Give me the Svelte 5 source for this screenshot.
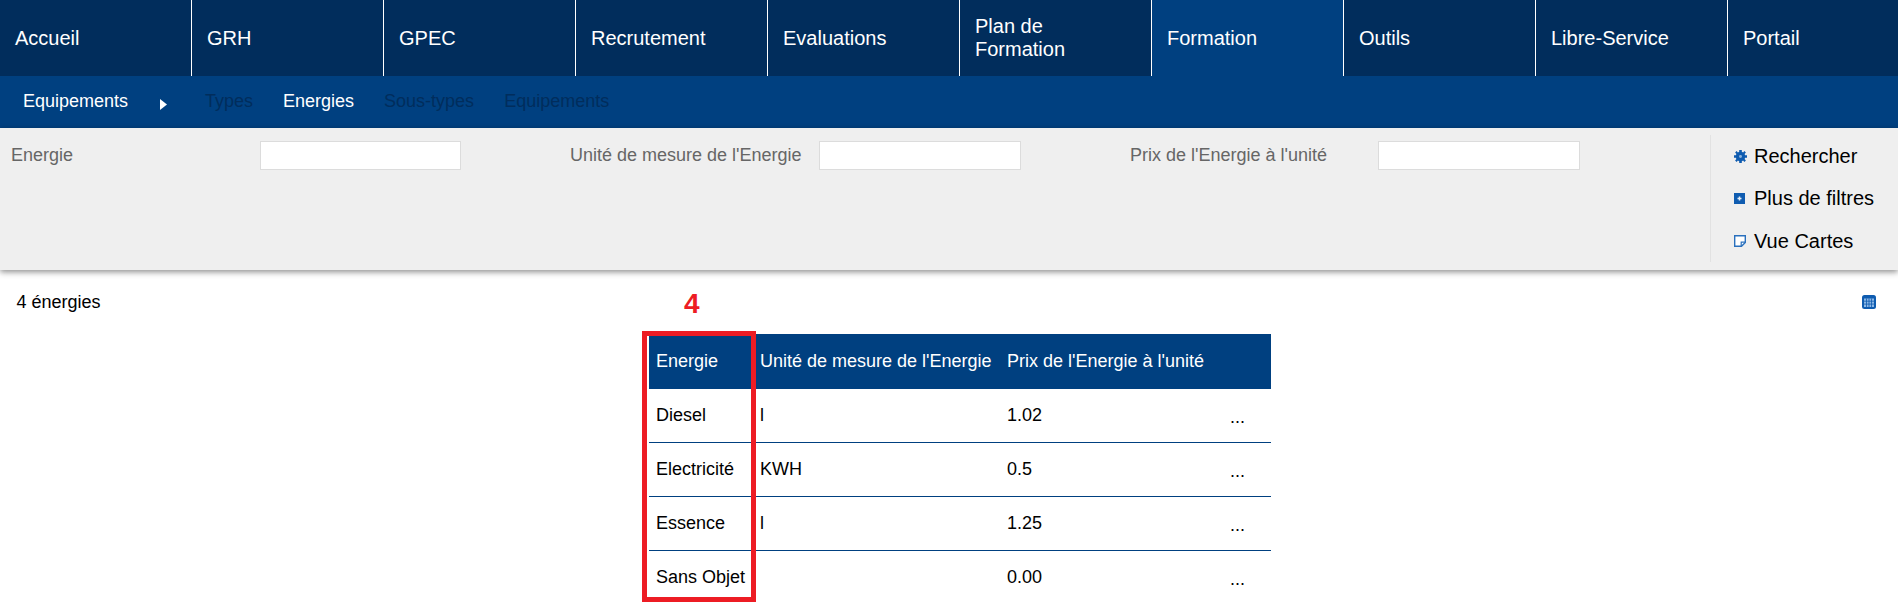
<script>
  const menu = ['Accueil', 'GRH', 'GPEC', 'Recrutement', 'Evaluations', 'Plan de Formation', 'Formation', 'Outils', 'Libre-Service', 'Portail'];
  const subItems = [
    { label: 'Types', on: false },
    { label: 'Energies', on: true },
    { label: 'Sous-types', on: false },
    { label: 'Equipements', on: false }
  ];
  const filters = ['Energie', "Unité de mesure de l'Energie", "Prix de l'Energie à l'unité"];
  const rows = [
    ['Diesel', 'l', '1.02'],
    ['Electricité', 'KWH', '0.5'],
    ['Essence', 'l', '1.25'],
    ['Sans Objet', '', '0.00']
  ];
</script>

<nav class="menu">
  {#each menu as item}
    <a class="menu-item" class:active={item === 'Formation'} href="#top">{item}</a>
  {/each}
</nav>

<div class="subnav">
  <span class="sub-title">Equipements</span>
  <svg class="sub-arrow" width="7" height="11" viewBox="0 0 7 11"><path d="M0 0l7 5.5-7 5.5z" fill="#fff" /></svg>
  {#each subItems as s}
    <a class="sub-item" class:on={s.on} href="#top">{s.label}</a>
  {/each}
</div>

<section class="filters">
  <div class="fields">
    {#each filters as f}
      <div class="field">
        <label for={f}>{f}</label>
        <input id={f} type="text" />
      </div>
    {/each}
  </div>
  <div class="actions">
    <a class="action" href="#top">
      <span class="ico">
        <svg width="13" height="13" viewBox="0 0 14 14">
          <path fill="#0f5cb0" d="M5.6 0h2.8v2l1.4.6L11.2 1.2l1.6 1.6-1.4 1.4.6 1.4h2v2.8h-2l-.6 1.4 1.4 1.4-1.6 1.6-1.4-1.4-1.4.6v2H5.6v-2l-1.4-.6-1.4 1.4-1.6-1.6 1.4-1.4-.6-1.4H0V5.6h2l.6-1.4-1.4-1.4 1.6-1.6 1.4 1.4 1.4-.6z" />
          <circle cx="7" cy="7" r="1.6" fill="#8fb4dc" />
        </svg>
      </span>
      Rechercher
    </a>
    <a class="action" href="#top">
      <span class="ico">
        <svg width="11" height="11" viewBox="0 0 11 11">
          <rect width="11" height="11" fill="#0f5cb0" />
          <path d="M3.5 5.5h4M5.5 3.5v4" stroke="#e6eff8" stroke-width="1.5" />
        </svg>
      </span>
      Plus de filtres
    </a>
    <a class="action" href="#top">
      <span class="ico">
        <svg width="12" height="12" viewBox="0 0 12 12">
          <path d="M.7.7h10.6v6.8l-3.8 3.8H.7z" fill="#fff" stroke="#2a70bd" stroke-width="1.4" />
          <path d="M7.2 11V7.2H11" fill="none" stroke="#2a70bd" stroke-width="1.2" />
        </svg>
      </span>
      Vue Cartes
    </a>
  </div>
</section>

<div class="result-bar">
  <span>4 énergies</span>
  <svg width="14" height="14" viewBox="0 0 14 14">
    <rect width="14" height="14" rx="2.5" fill="#0f5cb0" />
    <rect x="2" y="3.5" width="10" height="8.5" fill="#8db8e6" />
    <path d="M2 6.2h10M2 9.1h10M4.5 3.5V12M7 3.5V12M9.5 3.5V12" stroke="#0f5cb0" stroke-width="0.8" />
  </svg>
</div>

<div class="table-area">
  <div class="table-wrap">
    <table>
      <thead>
        <tr>
          <th class="c1">Energie</th>
          <th class="c2">Unité de mesure de l'Energie</th>
          <th class="c3">Prix de l'Energie à l'unité</th>
          <th class="c4"></th>
        </tr>
      </thead>
      <tbody>
        {#each rows as r}
          <tr>
            <td>{r[0]}</td>
            <td>{r[1]}</td>
            <td class="price">{r[2]}</td>
            <td class="dots"><span>...</span></td>
          </tr>
        {/each}
      </tbody>
    </table>
    <div class="mark-box"></div>
    <div class="mark-num">4</div>
  </div>
</div>

<style>
  :global(body) {
    margin: 0;
    background: #fff;
    font-family: "Liberation Sans", Arial, sans-serif;
    overflow: hidden;
  }

  a {
    text-decoration: none;
    color: inherit;
  }

  .menu {
    display: flex;
    height: 76px;
    background: #012d5c;
    overflow: hidden;
  }

  .menu-item {
    flex: 0 0 192px;
    box-sizing: border-box;
    display: flex;
    align-items: center;
    padding: 0 30px 0 15px;
    border-right: 1px solid #fff;
    color: #fff;
    font-size: 20px;
    line-height: 23px;
  }

  .menu-item:last-child {
    border-right: none;
  }

  .menu-item.active {
    background: #004080;
  }

  .subnav {
    display: flex;
    align-items: center;
    height: 52px;
    background: #004080;
    padding: 0 0 2px 23px;
    font-size: 18px;
    box-sizing: border-box;
  }

  .sub-title {
    color: #fff;
    width: 137px;
  }

  .sub-arrow {
    margin-top: 7px;
    margin-right: 38px;
    flex: none;
  }

  .sub-item {
    color: #012d5c;
    margin-right: 30px;
  }

  .sub-item.on {
    color: #fff;
  }

  .filters {
    display: flex;
    justify-content: space-between;
    height: 142px;
    background: #efefef;
    box-shadow: 0 2px 6px rgba(0, 0, 0, 0.45);
    position: relative;
    box-sizing: border-box;
  }

  .fields {
    display: flex;
    padding-top: 13px;
  }

  .field {
    width: 559px;
    box-sizing: border-box;
    padding-left: 11px;
    display: flex;
    align-items: flex-start;
  }

  .field label {
    width: 249px;
    flex: none;
    color: #666;
    font-size: 18px;
    line-height: 29px;
  }

  .field:last-child {
    padding-left: 12px;
  }

  .field:last-child label {
    width: 248px;
  }

  .field input {
    width: 202px;
    height: 29px;
    box-sizing: border-box;
    background: #fff;
    border: 1px solid #dcdcdc;
    padding: 0;
    margin: 0;
  }

  .field:first-child input {
    width: 201px;
  }

  .actions {
    width: 188px;
    margin: 7px 0 8px;
    border-left: 1px solid #e2e2e2;
    box-sizing: border-box;
    padding: 0 0 0 23px;
    display: flex;
    flex-direction: column;
    justify-content: space-between;
    color: #000;
    font-size: 20px;
  }

  .action {
    display: flex;
    align-items: center;
    gap: 7px;
    height: 42px;
    white-space: nowrap;
  }

  .ico {
    flex: none;
    width: 13px;
    display: flex;
    align-items: center;
  }

  .result-bar {
    display: flex;
    justify-content: space-between;
    align-items: center;
    height: 26px;
    margin-top: 19px;
    padding: 0 22px 0 16.5px;
    font-size: 18px;
    color: #000;
  }

  .table-area {
    display: flex;
    justify-content: center;
    padding: 19px 0 0 22px;
  }

  .table-wrap {
    position: relative;
  }

  table {
    border-collapse: collapse;
    width: 622px;
    table-layout: fixed;
    font-size: 18px;
    color: #000;
  }

  th {
    background: #004080;
    color: #fff;
    height: 55px;
    font-weight: normal;
    text-align: left;
    padding: 0 0 0 7px;
    white-space: nowrap;
  }

  .c1 { width: 97px; }
  .c2 { width: 239px; }
  .c3 { width: 212px; }

  th.c3, td.price {
    padding-left: 8px;
  }

  td {
    height: 53px;
    padding: 0 0 0 7px;
    border-bottom: 1px solid #004080;
    white-space: nowrap;
  }

  tbody tr:last-child td {
    border-bottom: none;
  }

  td.dots span {
    position: relative;
    top: 2px;
    left: 4px;
  }

  .mark-box {
    position: absolute;
    left: -7px;
    top: -3px;
    width: 114px;
    height: 271px;
    box-sizing: border-box;
    border: 5px solid #ed1c24;
  }

  .mark-num {
    position: absolute;
    left: 35px;
    top: -46px;
    color: #ed1c24;
    font-size: 28px;
    font-weight: bold;
    line-height: 32px;
  }
</style>
